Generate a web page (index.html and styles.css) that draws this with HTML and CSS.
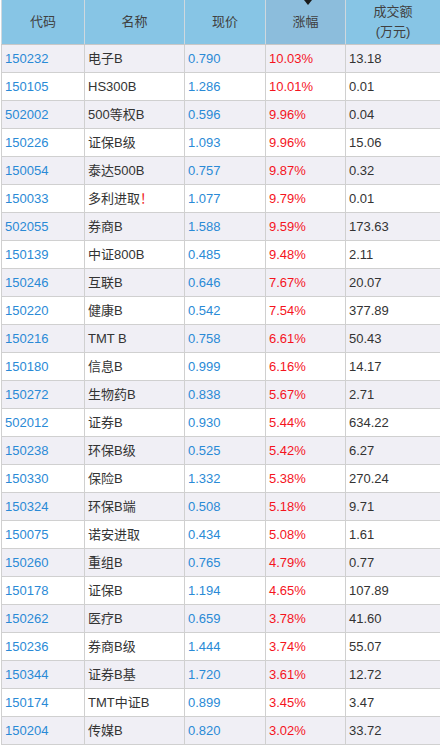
FILE: index.html
```html
<!DOCTYPE html>
<html lang="zh-CN">
<head>
<meta charset="utf-8">
<title>分级B涨幅</title>
<link rel="stylesheet" href="styles.css">
</head>
<body>
<table class="quotes">
  <colgroup>
    <col class="c-code"><col class="c-name"><col class="c-price"><col class="c-chg"><col class="c-vol">
  </colgroup>
  <thead>
    <tr>
      <th>代码</th>
      <th>名称</th>
      <th>现价</th>
      <th class="sorted"><span class="arrow"></span>涨幅</th>
      <th>成交额<br>(万元)</th>
    </tr>
  </thead>
  <tbody>
    <tr><td class="code">150232</td><td class="name">电子B</td><td class="price">0.790</td><td class="chg">10.03%</td><td class="vol">13.18</td></tr>
    <tr><td class="code">150105</td><td class="name">HS300B</td><td class="price">1.286</td><td class="chg">10.01%</td><td class="vol">0.01</td></tr>
    <tr><td class="code">502002</td><td class="name">500等权B</td><td class="price">0.596</td><td class="chg">9.96%</td><td class="vol">0.04</td></tr>
    <tr><td class="code">150226</td><td class="name">证保B级</td><td class="price">1.093</td><td class="chg">9.96%</td><td class="vol">15.06</td></tr>
    <tr><td class="code">150054</td><td class="name">泰达500B</td><td class="price">0.757</td><td class="chg">9.87%</td><td class="vol">0.32</td></tr>
    <tr><td class="code">150033</td><td class="name">多利进取<span class="warn">！</span></td><td class="price">1.077</td><td class="chg">9.79%</td><td class="vol">0.01</td></tr>
    <tr><td class="code">502055</td><td class="name">券商B</td><td class="price">1.588</td><td class="chg">9.59%</td><td class="vol">173.63</td></tr>
    <tr><td class="code">150139</td><td class="name">中证800B</td><td class="price">0.485</td><td class="chg">9.48%</td><td class="vol">2.11</td></tr>
    <tr><td class="code">150246</td><td class="name">互联B</td><td class="price">0.646</td><td class="chg">7.67%</td><td class="vol">20.07</td></tr>
    <tr><td class="code">150220</td><td class="name">健康B</td><td class="price">0.542</td><td class="chg">7.54%</td><td class="vol">377.89</td></tr>
    <tr><td class="code">150216</td><td class="name">TMT B</td><td class="price">0.758</td><td class="chg">6.61%</td><td class="vol">50.43</td></tr>
    <tr><td class="code">150180</td><td class="name">信息B</td><td class="price">0.999</td><td class="chg">6.16%</td><td class="vol">14.17</td></tr>
    <tr><td class="code">150272</td><td class="name">生物药B</td><td class="price">0.838</td><td class="chg">5.67%</td><td class="vol">2.71</td></tr>
    <tr><td class="code">502012</td><td class="name">证券B</td><td class="price">0.930</td><td class="chg">5.44%</td><td class="vol">634.22</td></tr>
    <tr><td class="code">150238</td><td class="name">环保B级</td><td class="price">0.525</td><td class="chg">5.42%</td><td class="vol">6.27</td></tr>
    <tr><td class="code">150330</td><td class="name">保险B</td><td class="price">1.332</td><td class="chg">5.38%</td><td class="vol">270.24</td></tr>
    <tr><td class="code">150324</td><td class="name">环保B端</td><td class="price">0.508</td><td class="chg">5.18%</td><td class="vol">9.71</td></tr>
    <tr><td class="code">150075</td><td class="name">诺安进取</td><td class="price">0.434</td><td class="chg">5.08%</td><td class="vol">1.61</td></tr>
    <tr><td class="code">150260</td><td class="name">重组B</td><td class="price">0.765</td><td class="chg">4.79%</td><td class="vol">0.77</td></tr>
    <tr><td class="code">150178</td><td class="name">证保B</td><td class="price">1.194</td><td class="chg">4.65%</td><td class="vol">107.89</td></tr>
    <tr><td class="code">150262</td><td class="name">医疗B</td><td class="price">0.659</td><td class="chg">3.78%</td><td class="vol">41.60</td></tr>
    <tr><td class="code">150236</td><td class="name">券商B级</td><td class="price">1.444</td><td class="chg">3.74%</td><td class="vol">55.07</td></tr>
    <tr><td class="code">150344</td><td class="name">证券B基</td><td class="price">1.720</td><td class="chg">3.61%</td><td class="vol">12.72</td></tr>
    <tr><td class="code">150174</td><td class="name">TMT中证B</td><td class="price">0.899</td><td class="chg">3.45%</td><td class="vol">3.47</td></tr>
    <tr><td class="code">150204</td><td class="name">传媒B</td><td class="price">0.820</td><td class="chg">3.02%</td><td class="vol">33.72</td></tr>
  </tbody>
</table>
</body>
</html>
```

FILE: styles.css
```css
html, body {
  margin: 0;
  padding: 0;
  background: #ffffff;
}

body {
  font-family: "Liberation Sans", Arial, "Noto Sans CJK SC", sans-serif;
  font-size: 13px;
  color: #333333;
}

.quotes {
  border-collapse: collapse;
  table-layout: fixed;
  width: 439px;
  margin-left: 1px;
}

.c-code { width: 83px; }
.c-name { width: 100px; }
.c-price { width: 81px; }
.c-chg { width: 80px; }
.c-vol { width: 95px; }

.quotes th {
  background: #87c5e5;
  color: #404040;
  font-weight: normal;
  font-size: 13px;
  line-height: 20px;
  height: 44px;
  padding: 0;
  text-align: center;
  vertical-align: middle;
  border-left: 1px solid #cfd8de;
  border-right: 1px solid #cfd8de;
  border-bottom: 1px solid #c8c8c8;
}

.quotes th.sorted {
  background: #8cbddc;
  position: relative;
}

.arrow {
  position: absolute;
  left: 38px;
  top: 0;
  width: 0;
  height: 0;
  border-left: 4px solid transparent;
  border-right: 4px solid transparent;
  border-top: 5px solid #1a1a1a;
}

.quotes td {
  height: 27px;
  padding: 0 0 0 3px;
  border: 1px solid #d0d0d0;
  white-space: nowrap;
  vertical-align: middle;
  line-height: 16px;
}

.quotes tbody tr:nth-child(odd) td {
  background: #f0eff5;
}

.quotes tbody tr:nth-child(even) td {
  background: #ffffff;
}

.code, .price {
  color: #2a8ad6;
}

.name, .vol {
  color: #333333;
}

.chg {
  color: #f5141e;
}

.warn {
  color: #f01818;
  font-weight: normal;
}
```
